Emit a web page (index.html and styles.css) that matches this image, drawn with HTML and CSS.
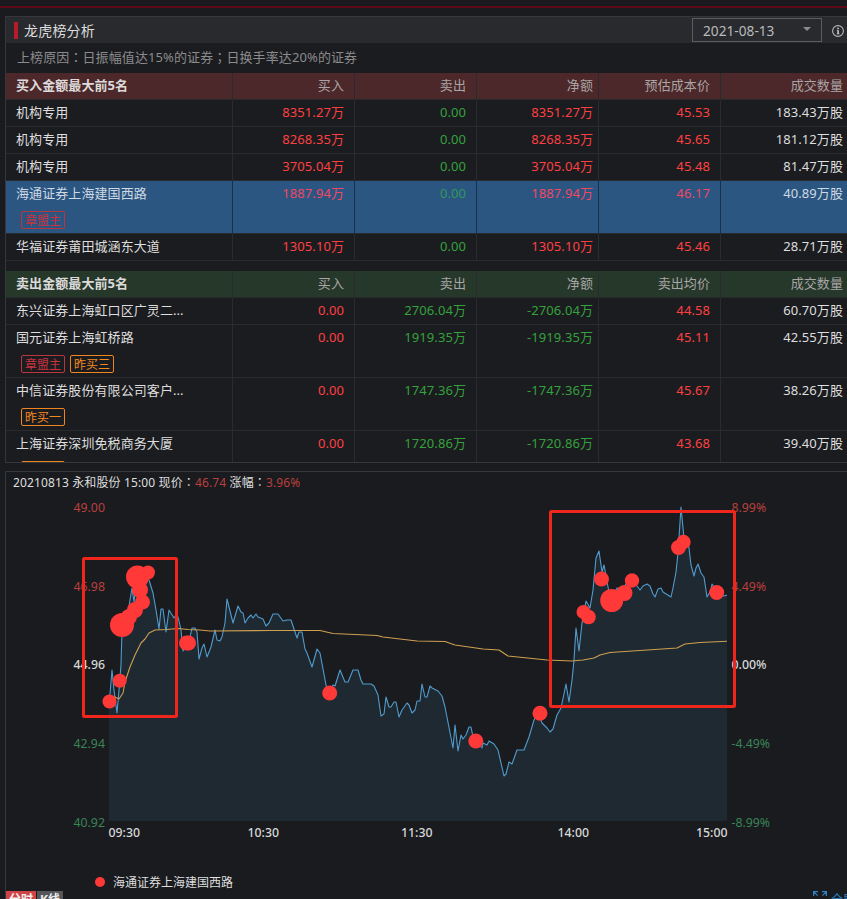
FILE: index.html
```
<!DOCTYPE html>
<html lang="zh-CN">
<head>
    <meta charset="UTF-8">
    <meta name="viewport" content="width=device-width, initial-scale=1.0">
    <title>龙虎榜分析</title>
    <link rel="stylesheet" href="styles.css">
</head>
<body>
    <div class="top-line"></div>

    <section class="panel">
        <header class="panel-header">
            <span class="mark"></span>
            <h1>龙虎榜分析</h1>
            <div class="date-select">
                <span>2021-08-13</span>
                <span class="arrow"></span>
            </div>
            <svg class="info" width="12" height="12" viewBox="0 0 12 12">
                <circle cx="6" cy="6" r="5.4" fill="none" stroke="#b5b6b8" stroke-width="1.1"/>
                <path d="M5.2 2.7h1.7v1.5H5.2zM4.8 5.2h2.1v3.2h.6v.9H4.7v-.9h.6V6.1h-.5z" fill="#c5c6c8"/>
            </svg>
        </header>
        <p class="reason">上榜原因<span lang="zh-TW">：</span>日振幅值达15%的证券<span lang="zh-TW">；</span>日换手率达20%的证券</p>

        <table class="buy">
            <colgroup><col class="c-name"><col class="c-num"><col class="c-num"><col class="c-num"><col class="c-num"><col></colgroup>
            <tr><th>买入金额最大前5名</th><th>买入</th><th>卖出</th><th>净额</th><th>预估成本价</th><th>成交数量</th></tr>
            <tr><td>机构专用</td><td class="red">8351.27万</td><td class="green">0.00</td><td class="red">8351.27万</td><td class="red">45.53</td><td>183.43万股</td></tr>
            <tr><td>机构专用</td><td class="red">8268.35万</td><td class="green">0.00</td><td class="red">8268.35万</td><td class="red">45.65</td><td>181.12万股</td></tr>
            <tr><td>机构专用</td><td class="red">3705.04万</td><td class="green">0.00</td><td class="red">3705.04万</td><td class="red">45.48</td><td>81.47万股</td></tr>
            <tr class="tall selected"><td>海通证券上海建国西路<div class="tags"><span class="tag">章盟主</span></div></td><td class="red">1887.94万</td><td class="green">0.00</td><td class="red">1887.94万</td><td class="red">46.17</td><td>40.89万股</td></tr>
            <tr><td>华福证券莆田城涵东大道</td><td class="red">1305.10万</td><td class="green">0.00</td><td class="red">1305.10万</td><td class="red">45.46</td><td>28.71万股</td></tr>
        </table>

        <table class="sell">
            <colgroup><col class="c-name"><col class="c-num"><col class="c-num"><col class="c-num"><col class="c-num"><col></colgroup>
            <tr><th>卖出金额最大前5名</th><th>买入</th><th>卖出</th><th>净额</th><th>卖出均价</th><th>成交数量</th></tr>
            <tr><td>东兴证券上海虹口区广灵二...</td><td class="red">0.00</td><td class="green">2706.04万</td><td class="green">-2706.04万</td><td class="red">44.58</td><td>60.70万股</td></tr>
            <tr class="tall"><td>国元证券上海虹桥路<div class="tags"><span class="tag">章盟主</span><span class="tag orange">昨买三</span></div></td><td class="red">0.00</td><td class="green">1919.35万</td><td class="green">-1919.35万</td><td class="red">45.11</td><td>42.55万股</td></tr>
            <tr class="tall"><td>中信证券股份有限公司客户...<div class="tags"><span class="tag orange">昨买一</span></div></td><td class="red">0.00</td><td class="green">1747.36万</td><td class="green">-1747.36万</td><td class="red">45.67</td><td>38.26万股</td></tr>
            <tr class="tall"><td>上海证券深圳免税商务大厦<div class="tags"><span class="tag orange">&nbsp;</span></div></td><td class="red">0.00</td><td class="green">1720.86万</td><td class="green">-1720.86万</td><td class="red">43.68</td><td>39.40万股</td></tr>
        </table>
    </section>

    <section class="chart-panel">
        <p class="quote">20210813 永和股份 15:00 现价<i lang="zh-TW">：</i><span>46.74</span> 涨幅<i lang="zh-TW">：</i><span>3.96%</span></p>

        <svg class="chart" width="841" height="370" viewBox="6 494 841 370">
            <g class="axis">
                <text class="up" x="73.5" y="512">49.00</text>
                <text class="up" x="73.5" y="591">46.98</text>
                <text x="73.5" y="669">44.96</text>
                <text class="down" x="73.5" y="748">42.94</text>
                <text class="down" x="73.5" y="827">40.92</text>
                <text class="up" x="731.5" y="512">8.99%</text>
                <text class="up" x="731.5" y="591">4.49%</text>
                <text x="731.5" y="669">0.00%</text>
                <text class="down" x="731.5" y="748">-4.49%</text>
                <text class="down" x="731.5" y="827">-8.99%</text>
                <text x="108.500" y="837">09:30</text>
                <text x="247.500" y="837">10:30</text>
                <text x="401" y="837">11:30</text>
                <text x="557.500" y="837">14:00</text>
                <text x="696" y="837">15:00</text>
            </g>

            <path class="area" id="area"/>
            <polyline class="price" id="price" points="109,702 110,694 112,670 114,690 117,713 119,690 121,665 122,630 127,620 130,600 132,588 134,602 137,575 143,572 149,580 153,593 156,610 159,629 161,609 163,609 166,632 169,610 174,618 176,615 178,617 181,630 183,651 190,637 192,628 195,628 197,632 199,659 202,648 204,644 207,657 211,647 215,630 217,640 220,641 222,637 225,623 227,599 233,623 238,606 241,612 243,613 245,623 248,618 251,615 253,618 256,614 258,617 263,619 266,626 269,623 273,614 278,614 283,621 287,620 291,620 297,638 299,632 302,632 305,649 307,653 312,667 317,649 320,653 326,685 329,693 333,685 335,686 340,670 345,682 348,682 353,670 358,670 361,680 363,684 371,684 374,686 378,695 381,716 384,714 386,697 389,707 391,707 394,702 396,702 399,717 402,710 407,703 409,705 412,713 415,710 417,701 420,701 422,684 425,697 427,697 430,686 432,688 438,691 442,696 445,707 453,748 455,725 458,751 461,735 463,739 466,735 469,727 471,727 473,737 482,748 483,743 487,745 489,741 494,744 498,750 504,776 506,774 509,762 512,764 517,750 524,750 529,737 534,720 538,713 542,723 547,728 550,732 553,729 557,715 561,708 566,684 569,702 572,680 574,660 576,628 579,651 582,623 586,601 590,608 593,590 596,558 599,551 602,572 604,565 608,587 611,600 617,588 622,590 630,578 637,586 640,590 643,586 647,584 650,586 653,594 655,597 658,589 661,588 663,592 671,597 673,588 676,572 678,553 681,507 684,538 687,540 689,548 691,565 694,576 696,568 698,564 701,573 704,577 707,597 711,590 712,584 718,593 724,596 727,595"/>
            <polyline class="average" points="109,702 112,698 115,697 119,699 123,693 125,682 130,667 135,655 141,643 145,639 149,633 155,630 167,629.500 178,628.500 188,629.500 200,630 210,631 270,630.500 320,630.500 333,633.500 377,635.500 383,637 417,641 445,641.500 455,645 483,649 499,650 508,656 547,660 572,661 583,660 594,658 600,655 610,652.500 677,648 685,644 700,642.500 727,641.300"/>

            <g class="trades">
                <circle cx="109.500" cy="701.500" r="7"/>
                <circle cx="119.700" cy="680.700" r="7"/>
                <circle cx="122" cy="625" r="12"/>
                <circle cx="129" cy="617" r="8"/>
                <circle cx="135" cy="610" r="8"/>
                <circle cx="142.500" cy="602" r="7.500"/>
                <circle cx="140" cy="590" r="8"/>
                <circle cx="137.500" cy="577" r="11.500"/>
                <circle cx="148" cy="572.500" r="7"/>
                <circle cx="186.500" cy="643" r="7.500"/>
                <circle cx="188.500" cy="643" r="7.500"/>
                <circle cx="329.700" cy="693" r="7.500"/>
                <circle cx="475.800" cy="741" r="7.500"/>
                <circle cx="540" cy="713.300" r="7.500"/>
                <circle cx="583.500" cy="612" r="7"/>
                <circle cx="588.500" cy="617" r="7.300"/>
                <circle cx="601.500" cy="579" r="7.500"/>
                <circle cx="611.700" cy="600.500" r="11.500"/>
                <circle cx="624.500" cy="593" r="8"/>
                <circle cx="632" cy="580.500" r="7.200"/>
                <circle cx="678.500" cy="547.500" r="7.500"/>
                <circle cx="683.500" cy="542" r="7.200"/>
                <circle cx="716.700" cy="592.500" r="7.500"/>
            </g>

            <rect class="highlight" x="83.500" y="558.500" width="93" height="158" rx="1"/>
            <rect class="highlight" x="550.500" y="511.500" width="184" height="195" rx="1"/>
        </svg>

        <div class="legend"><span class="dot"></span>海通证券上海建国西路</div>

        <footer class="bottom">
            <span class="tab active">分时</span>
            <span class="tab">K线</span>
            <span class="full">
                <svg width="14" height="13" viewBox="0 0 14 13">
                    <path d="M.6 5V.6H5M.6.6l4 4M9 .6h4.400V5M13.400.6l-4 4M.6 8v4.400H5M13.400 8v4.400H9" fill="none" stroke="#2d83c9" stroke-width="1.200"/>
                </svg>
                全屏
            </span>
        </footer>
    </section>

    <script>
        // 价格线下方的填充区域
        const points = document.getElementById('price').getAttribute('points');
        document.getElementById('area').setAttribute('d', `M109,821 L${points} L727,821 Z`);
    </script>
</body>
</html>
```
FILE: styles.css
```
* {
    box-sizing: border-box;
}
body {
    margin: 0;
    height: 899px;
    overflow: hidden;
    background-color: #191b1f;
    color: #dedede;
    font-family: "Noto Sans", "Noto Sans CJK SC", sans-serif;
    font-size: 13px;
}
/* 标点居中 */
[lang="zh-TW"] {
    font-family: "Noto Sans CJK TC", sans-serif;
    font-style: normal;
    line-height: 1;
}
.top-line {
    height: 8px;
    border-bottom: 2px solid #5e0b19;
}
.panel {
    margin: 8px 0 0 5px;
    height: 447px;
    overflow: hidden;
    border: 1px solid #35373a;
    border-right: none;
    background-color: #1b1c20;
}
.panel-header {
    display: flex;
    align-items: center;
    height: 26px;
    padding: 0 3px 0 8px;
    background-color: #292a2e;
}
.mark {
    width: 4px;
    height: 17px;
    background-color: #b81c2b;
}
h1 {
    margin: 2px 0 0 6px;
    font-size: 14px;
    line-height: 20px;
    font-weight: normal;
    letter-spacing: 0.2px;
}
.date-select {
    display: flex;
    justify-content: space-between;
    align-items: center;
    width: 130px;
    height: 24px;
    margin-left: auto;
    padding: 0 10px;
    border: 1px solid #5b5c5f;
    color: #b9babc;
    font-size: 13.7px;
}
.arrow {
    border: 4px solid transparent;
    border-top-color: #8a8b8e;
    border-bottom: none;
    margin-top: -3px;
}
.info {
    margin: 2px 0 0 10px;
}
.reason {
    margin: 0;
    height: 30px;
    padding-left: 11px;
    line-height: 29px;
    color: #8b8b8c;
    letter-spacing: 0.1px;
}
table {
    width: 841px;
    table-layout: fixed;
    border-collapse: separate;
    border-spacing: 0;
}
.c-name {
    width: 227px;
}
.c-num {
    width: 122px;
}
tr {
    height: 27px;
}
tr.tall {
    height: 53px;
}
th, td {
    padding: 0 10px 0 0;
    border-right: 1px solid #292b2e;
    border-bottom: 1px solid #292b2e;
    line-height: 25px;
    text-align: right;
    vertical-align: top;
    white-space: nowrap;
    letter-spacing: 0.08px;
}
th {
    color: #a9a5a5;
    font-weight: normal;
}
th:first-child, td:first-child {
    padding-left: 10px;
    text-align: left;
}
th:first-child {
    color: #dcdada;
    font-weight: bold;
}
th:nth-child(4), td:nth-child(4) {
    padding-right: 5px;
}
th:last-child, td:last-child {
    padding-right: 4px;
    border-right: none;
}
.buy th {
    background-color: #4d282a;
}
.sell {
    margin-top: 10px;
}
.sell th {
    background-color: #25382a;
}
.red {
    color: #ff4040;
}
.green {
    color: #35a13c;
}
.selected td {
    background-color: #2b5681;
    border-right-color: #18314a;
    color: #cfd9e3;
}
.selected td.red {
    color: #f04763;
}
.selected td.green {
    color: #30985b;
}
.tags {
    display: flex;
    gap: 5px;
    padding: 5px 0 0 5px;
}
.tag {
    width: 44px;
    height: 18px;
    border: 1px solid #b9363f;
    border-radius: 2px;
    color: #c8333e;
    font-size: 12px;
    line-height: 17px;
    text-align: center;
}
.tag.orange {
    border-color: #ef8520;
    color: #f78a1f;
}
.chart-panel {
    margin: 8px 0 0 5px;
    height: 428px;
    overflow: hidden;
    border-top: 1px solid #35373a;
    border-left: 1px solid #35373a;
}
.quote {
    margin: 0;
    height: 22px;
    padding-left: 7px;
    font-size: 12px;
    line-height: 21px;
    letter-spacing: 0.13px;
}
.quote span {
    color: #b9403c;
}
.chart {
    display: block;
}
.axis text {
    fill: #d8d8d8;
    font-size: 12.3px;
    font-weight: 500;
}
.axis .up {
    fill: #b9403c;
    font-weight: normal;
}
.axis .down {
    fill: #398455;
    font-weight: normal;
}
.area {
    fill: #1f2932;
}
.price, .average {
    fill: none;
    stroke: #519ccd;
    stroke-width: 1.1;
    stroke-linejoin: round;
}
.average {
    stroke: #cf9f52;
}
.trades {
    fill: #ff3838;
}
.highlight {
    fill: none;
    stroke: #f0261d;
    stroke-width: 3;
}
.legend {
    display: flex;
    align-items: center;
    height: 27px;
    padding: 8px 0 0 89px;
    font-size: 12px;
}
.dot {
    width: 10px;
    height: 10px;
    margin-right: 8px;
    border-radius: 50%;
    background-color: #ff3838;
}
.bottom {
    display: flex;
    gap: 1px;
    height: 20px;
    font-size: 12px;
    font-weight: bold;
    line-height: 18px;
}
.tab {
    width: 26px;
    text-align: center;
    white-space: nowrap;
    color: #eee;
    background-color: #555659;
}
.tab.active {
    width: 30px;
    background-color: #cf4446;
}
.full {
    display: flex;
    gap: 4px;
    margin-left: auto;
    margin-right: -8px;
    color: #2d83c9;
    font-weight: normal;
    white-space: nowrap;
}
```
